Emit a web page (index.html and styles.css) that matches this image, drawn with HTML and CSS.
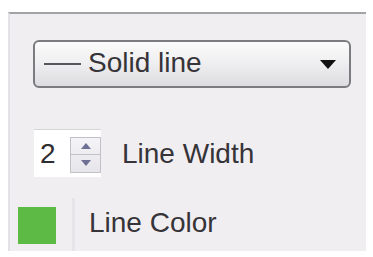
FILE: index.html
```html
<!DOCTYPE html>
<html>
<head>
<meta charset="utf-8">
<link rel="stylesheet" href="styles.css">
</head>
<body>
<div class="panel">
  <div class="select">
    <span class="dash"></span>
    <span class="select-label">Solid line</span>
    <span class="caret"></span>
  </div>
  <div class="row width-row">
    <div class="spinbox">
      <span class="spin-value">2</span>
      <div class="spin-buttons">
        <span class="spin-btn"><span class="tri up"></span></span>
        <span class="spin-btn"><span class="tri down"></span></span>
      </div>
    </div>
    <span class="label width-label">Line Width</span>
  </div>
  <div class="row color-row">
    <div class="swatch-cell"><span class="swatch"></span></div>
    <div class="sep"></div>
    <span class="label color-label">Line Color</span>
  </div>
</div>
</body>
</html>
```

FILE: styles.css
```css
html, body {
  margin: 0;
  padding: 0;
  background: #ffffff;
}
body {
  width: 373px;
  height: 257px;
  overflow: hidden;
  font-family: "Liberation Sans", Arial, sans-serif;
  color: #363438;
}
.panel {
  margin: 12px 7px 0 8px;
  height: 237px;
  border-top: 2px solid #a3a2a5;
  border-left: 2px solid #e3e1e5;
  background: #f1eef2;
  display: flex;
  flex-direction: column;
}
.select {
  margin: 26px 0 0 23px;
  width: 318px;
  height: 48px;
  box-sizing: border-box;
  border: 2px solid #7c7b7f;
  border-radius: 6px;
  background: linear-gradient(#fbfbfb, #f0eff1 45%, #dddcde);
  display: flex;
  align-items: center;
  padding: 0 13px 2px 9px;
}
.dash {
  width: 37px;
  height: 2px;
  background: #58565a;
  margin-right: 7px;
  margin-top: 1px;
}
.select-label {
  font-size: 28px;
  line-height: 32px;
  flex: 1;
}
.caret {
  width: 0;
  height: 0;
  border-left: 8px solid transparent;
  border-right: 8px solid transparent;
  border-top: 9px solid #111;
  margin-top: 2px;
}
.row {
  display: flex;
  align-items: center;
}
.label {
  font-size: 28px;
  line-height: 32px;
}
.width-row {
  margin: 41px 0 0 24px;
}
.spinbox {
  width: 67px;
  height: 48px;
  box-sizing: border-box;
  border-top: 1px solid #d6d5d8;
  background: #ffffff;
  display: flex;
  align-items: center;
  padding-left: 6px;
}
.spin-value {
  font-size: 28px;
  line-height: 32px;
  width: 30px;
  color: #2e2d30;
}
.spin-buttons {
  width: 31px;
  height: 36px;
  box-sizing: border-box;
  border: 1px solid #c2c1c5;
  background: linear-gradient(#f4f3f6, #e6e5ea);
  display: flex;
  flex-direction: column;
  margin-top: 2px;
}
.spin-btn {
  flex: 1;
  display: flex;
  align-items: center;
  justify-content: center;
}
.spin-btn + .spin-btn {
  border-top: 1px solid #c2c1c5;
}
.tri {
  width: 0;
  height: 0;
  border-left: 5px solid transparent;
  border-right: 5px solid transparent;
}
.tri.up {
  border-bottom: 6px solid #6d7094;
}
.tri.down {
  border-top: 6px solid #6d7094;
}
.width-label {
  margin-left: 21px;
  margin-top: 2px;
}
.color-row {
  margin-top: 21px;
  flex: 1;
  align-items: stretch;
}
.swatch-cell {
  width: 62px;
  display: flex;
  align-items: center;
  padding-left: 8px;
  box-sizing: border-box;
}
.swatch {
  width: 38px;
  height: 37px;
  background: #5cba45;
  margin-top: 2px;
}
.sep {
  width: 3px;
  background: #e6e4e8;
}
.color-label {
  align-self: center;
  margin-left: 14px;
  margin-bottom: 4px;
}
```
